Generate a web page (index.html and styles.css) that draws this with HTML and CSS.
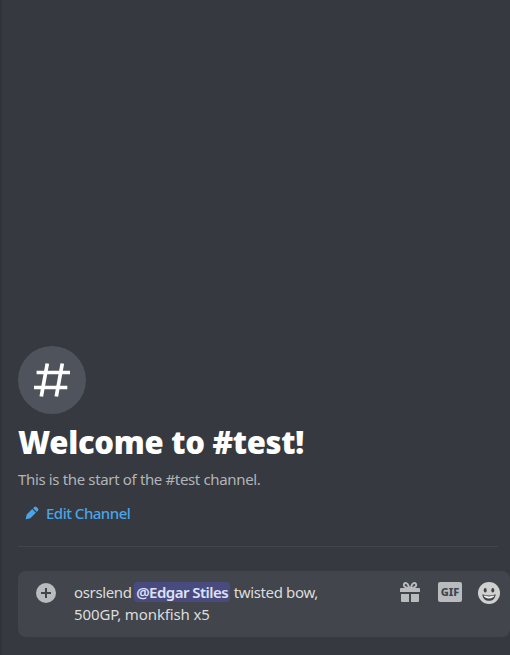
FILE: index.html
```html
<!DOCTYPE html>
<html lang="en">
<head>
<meta charset="utf-8">
<title>#test</title>
<link rel="stylesheet" href="styles.css">
</head>
<body>
<main class="chat">
  <section class="welcome">
    <div class="channel-icon">
      <svg width="68" height="68" viewBox="0 0 68 68"><path d="M29.3 17.5 23.3 50.5M44.3 17.5 38.3 50.5M18.6 26.5H52M16 41.5H49.3" fill="none" stroke="#fff" stroke-width="3.7"/></svg>
    </div>
    <h1 class="title">Welcome to #test!</h1>
    <p class="description">This is the start of the #test channel.</p>
    <a class="edit">
      <svg width="14" height="14" viewBox="0 0 14 14"><path fill="currentColor" d="M1.7 8.6 7.2 3.1 10.9 6.8 5.4 12.3 1 13.3Q.7 13.3.7 13ZM8.1 2.2 9.3 1Q10.4.1 11.5 1L13 2.5Q13.9 3.6 13 4.7L11.8 5.9Z"/></svg>
      <span>Edit Channel</span>
    </a>
  </section>
  <form class="composer">
    <svg class="attach" width="20" height="20" viewBox="0 0 20 20"><circle cx="10" cy="10" r="10" fill="#b9bbbe"/><path d="M10 5v10M5 10h10" stroke="#42454b" stroke-width="2"/></svg>
    <div class="message">osrslend <span class="mention">@Edgar Stiles</span> twisted bow,<br><span class="second">500GP, monkfish x5</span></div>
    <div class="tools">
      <svg class="gift" width="20" height="20" viewBox="0 0 20 20"><g fill="#b9bbbe"><path d="M1 6H19Q20 6 20 7V10H0V7Q0 6 1 6ZM1 12H9V20H2Q1 20 1 19ZM11 12H19V19Q19 20 18 20H11Z"/></g><path d="M9.4 6.5C8.5 3 7.3 1 5.7 1 4 1 3.5 2.6 4 3.8 4.6 5.2 6.5 5.8 9.4 6.5ZM10.6 6.5C11.5 3 12.7 1 14.3 1 16 1 16.5 2.6 16 3.8 15.4 5.2 13.5 5.8 10.6 6.5Z" fill="none" stroke="#b9bbbe" stroke-width="1.9"/></svg>
      <span class="gif">GIF</span>
      <svg class="emoji" width="22" height="22" viewBox="0 0 22 22"><circle cx="11" cy="11" r="11" fill="#d0d0cf"/><g fill="#40444b"><ellipse cx="7.2" cy="8.2" rx="1.5" ry="2.2"/><ellipse cx="14.8" cy="8.2" rx="1.5" ry="2.2"/><path d="M4.3 12.2Q11 14.6 17.7 12.2C17.3 16.5 14.6 18.8 11 18.8S4.7 16.5 4.3 12.2Z"/></g><path d="M5.5 13.6Q11 15.2 16.5 13.6 15.5 16.4 11 16.4T5.5 13.6Z" fill="#f2f2f2"/></svg>
    </div>
  </form>
</main>
</body>
</html>
```
FILE: styles.css
```css
* { box-sizing: border-box; }
body {
  margin: 0;
  background: #36393f;
  color: #dcddde;
  font: 16px/22px "Noto Sans", sans-serif;
}
.chat {
  height: 655px;
  display: flex;
  flex-direction: column;
  justify-content: flex-end;
  padding: 0 0 18px 16px;
  border-left: 2px solid #313338;
  overflow: hidden;
}
.welcome {
  height: 201px;
  margin-right: 12px;
  border-bottom: 1px solid #42454a;
}
.channel-icon {
  width: 68px;
  height: 68px;
  border-radius: 50%;
  background: #4f545c;
}
.channel-icon svg { display: block; }
.title {
  margin: 8px 0 0;
  color: #fff;
  font-size: 31px;
  line-height: 40px;
  font-weight: 900;
  letter-spacing: -.28px;
  white-space: nowrap;
}
.description {
  margin: 6px 0 0;
  color: #b2b4b8;
  font-size: 15px;
  letter-spacing: -.35px;
}
.edit {
  display: flex;
  align-items: center;
  gap: 7px;
  margin-top: 12px;
  padding-left: 7px;
  color: #49a5e9;
  font-size: 15px;
  font-weight: 500;
  letter-spacing: -.5px;
}
.composer {
  display: flex;
  height: 66px;
  margin-top: 24px;
  padding: 11px 10px 11px 18px;
  background: #42454b;
  border-radius: 8px;
}
.attach { margin-top: 1px; flex: none; }
.message {
  width: 262px;
  margin: -1px 0 0 18px;
  font-size: 15px;
  letter-spacing: -.36px;
  white-space: nowrap;
}
.second { letter-spacing: -.12px; }
.mention {
  margin-left: -1px;
  padding: 0 2px;
  border-radius: 3px;
  background: #494b7e;
  color: #dee0fc;
  font-weight: 600;
  letter-spacing: -.52px;
}
.tools {
  display: flex;
  align-items: flex-start;
  margin-left: auto;
}
.gift { margin-right: 18px; }
.gif {
  width: 24px;
  height: 20px;
  margin-right: 16px;
  border-radius: 2px;
  background: #b9bbbe;
  color: #40444b;
  font: 800 11px/20px "Noto Sans", sans-serif;
  text-align: center;
}
```
